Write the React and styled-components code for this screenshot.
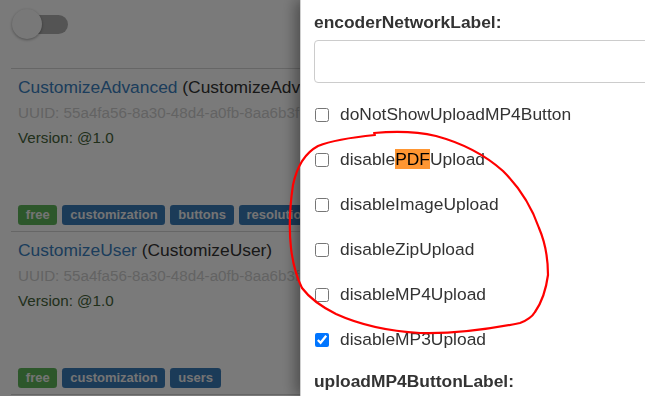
import React from 'react'
import styled, { createGlobalStyle } from 'styled-components'

const GlobalStyle = createGlobalStyle`
    html, body {
        margin: 0;
        padding: 0;
        overflow: hidden;
        background: #ffffff;
        font-family: "Liberation Sans", Arial, sans-serif;
        color: #333333;
    }
`

const Page = styled.div`
    padding-left: 11px;
    width: 900px;
`

const ToggleItem = styled.div`
    height: 69px;
    padding: 9px 0 0 1px;
    box-sizing: border-box;
    border-bottom: 1px solid #d6d6d6;
`

const Switch = styled.div`
    position: relative;
    width: 56px;
    height: 31px;
`

const SwitchTrack = styled.div`
    position: absolute;
    left: 9px;
    top: 6px;
    width: 47px;
    height: 19px;
    border-radius: 10px;
    background: #b0b0b0;
`

const SwitchThumb = styled.div`
    position: absolute;
    left: 0;
    top: 0;
    width: 30px;
    height: 30px;
    border-radius: 50%;
    background: #fafafa;
    box-shadow: 0 1px 3px rgba(0, 0, 0, 0.35);
`

const Item = styled.div`
    display: flex;
    flex-direction: column;
    padding: 6px 7px 6px 7px;
    border-bottom: 1px solid #d6d6d6;
`

const Title = styled.div`
    font-size: 17.4px;
    line-height: 25px;
    white-space: nowrap;
    color: #333333;
`

const TitleLink = styled.a`
    color: #3b7fc0;
    text-decoration: none;
`

const Uuid = styled.div`
    font-size: 15.2px;
    line-height: 25px;
    color: #cfcfcf;
    white-space: nowrap;
`

const Version = styled.div`
    font-size: 15.2px;
    line-height: 26px;
    color: #46643a;
    margin-bottom: 54px;
`

const Tags = styled.div`
    display: flex;
    gap: 5px;
    height: 20px;
`

const Tag = styled.span`
    display: inline-block;
    padding: 3px 0.6em 4px;
    font-size: 13px;
    line-height: 13px;
    font-weight: 700;
    color: #f2f2f2;
    border-radius: 0.25em;
    white-space: nowrap;
    background: ${props => (props.$kind === 'free' ? '#5fb75a' : '#3a7bb8')};
`

const Backdrop = styled.div`
    position: fixed;
    inset: 0;
    background: rgba(0, 0, 0, 0.52);
`

const Drawer = styled.aside`
    position: fixed;
    top: 0;
    bottom: 0;
    left: 300px;
    width: 380px;
    box-sizing: border-box;
    padding: 10px 0 0 13px;
    background: #ffffff;
    border-left: 1px solid #d0d0d0;
    box-shadow: -4px 0 14px rgba(0, 0, 0, 0.4);
`

const FieldLabel = styled.div`
    font-size: 17.4px;
    line-height: 25px;
    font-weight: 700;
    color: #333333;
    margin-top: ${props => props.$gap || 0}px;
`

const TextInput = styled.input`
    display: block;
    box-sizing: border-box;
    width: 100%;
    height: 43px;
    margin-top: 5px;
    border: 1px solid #cccccc;
    border-radius: 4px;
    background: #ffffff;
`

const Options = styled.div`
    display: flex;
    flex-direction: column;
    margin-top: 9px;
`

const OptionRow = styled.label`
    display: flex;
    align-items: center;
    gap: 11px;
    height: 45px;
    font-size: 17.4px;
    color: #333333;
`

const Box = styled.input`
    width: 14px;
    height: 14px;
    margin: 0 0 0 1px;
    accent-color: #0075ff;
`

const Match = styled.mark`
    background: #ff9632;
    color: #000000;
    padding: 0;
    line-height: 20px;
    display: inline-block;
`

const Annotation = styled.svg`
    position: fixed;
    inset: 0;
    pointer-events: none;
`

const plugins = [
    {
        name: 'CustomizeAdvanced',
        uuid: '55a4fa56-8a30-48d4-a0fb-8aa6b3f6ac34',
        tags: ['free', 'customization', 'buttons', 'resolution']
    },
    {
        name: 'CustomizeUser',
        uuid: '55a4fa56-8a30-48d4-a0fb-8aa6b3f6ac3f',
        tags: ['free', 'customization', 'users']
    }
]

const options = [
    { key: 'doNotShowUploadMP4Button' },
    { key: 'disablePDFUpload', match: 'PDF' },
    { key: 'disableImageUpload' },
    { key: 'disableZipUpload' },
    { key: 'disableMP4Upload' },
    { key: 'disableMP3Upload', checked: true }
]

const renderLabel = ({ key, match }) => {
    if (!match) return key
    const [before, after] = key.split(match)
    return (
        <span>
            {before}
            <Match>{match}</Match>
            {after}
        </span>
    )
}

// hand-drawn red ring round the disable*Upload options
const circlePath = 'M375 135 C355 137 333 140 318 146 C305 153 297 166 293 185 '
    + 'C290 205 289 230 291 248 C293 265 297 278 302 288 C308 296 320 306 336 314 '
    + 'C358 324 385 331 420 333 C455 334 495 328 520 323 C528 320 532 317 535 312 '
    + 'C542 302 546 290 548 275 C548 258 545 242 539 228 C532 208 520 188 503 171 '
    + 'C485 155 462 143 436 136 C415 131 395 131 374 133'

const App = () => (
    <>
        <GlobalStyle />
        <Page>
            <ToggleItem>
                <Switch>
                    <SwitchTrack />
                    <SwitchThumb />
                </Switch>
            </ToggleItem>
            {plugins.map(plugin => (
                <Item key={plugin.name}>
                    <Title>
                        <TitleLink href="#">{plugin.name}</TitleLink>
                        {` (${plugin.name})`}
                    </Title>
                    <Uuid>{`UUID: ${plugin.uuid}`}</Uuid>
                    <Version>Version: @1.0</Version>
                    <Tags>
                        {plugin.tags.map(tag => (
                            <Tag key={tag} $kind={tag}>{tag}</Tag>
                        ))}
                    </Tags>
                </Item>
            ))}
        </Page>
        <Backdrop />
        <Drawer>
            <FieldLabel>encoderNetworkLabel:</FieldLabel>
            <TextInput type="text" />
            <Options>
                {options.map(option => (
                    <OptionRow key={option.key}>
                        <Box type="checkbox" defaultChecked={!!option.checked} />
                        {renderLabel(option)}
                    </OptionRow>
                ))}
            </Options>
            <FieldLabel $gap={7}>uploadMP4ButtonLabel:</FieldLabel>
        </Drawer>
        <Annotation width="645" height="396" viewBox="0 0 645 396">
            <path
                d={circlePath}
                fill="none"
                stroke="#ff0000"
                strokeWidth="2.2"
                strokeLinecap="round"
                strokeLinejoin="round"
            />
        </Annotation>
    </>
)

export default App
